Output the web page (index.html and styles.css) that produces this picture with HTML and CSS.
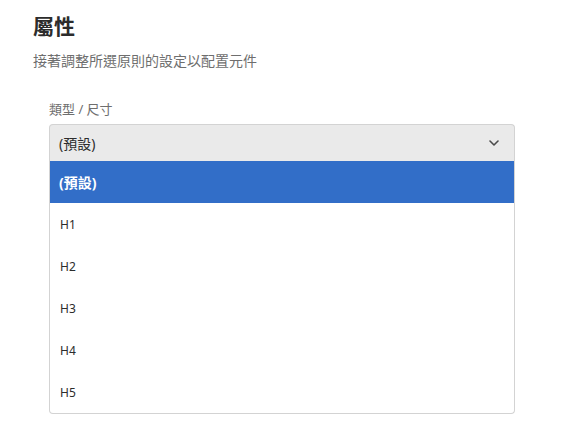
FILE: index.html
```html
<!DOCTYPE html>
<html lang="zh-Hant">
<head>
<meta charset="utf-8">
<link rel="stylesheet" href="styles.css">
</head>
<body>
<div class="panel">
  <h1 class="title">屬性</h1>
  <p class="subtitle">接著調整所選原則的設定以配置元件</p>
  <div class="field">
    <div class="label">類型 / 尺寸</div>
    <div class="select">
      <span class="value">(預設)</span>
      <svg class="chev" width="10" height="6" viewBox="0 0 10 6"><path d="M1 1 L5 5 L9 1" fill="none" stroke="#4b4b4b" stroke-width="1.6" stroke-linecap="round" stroke-linejoin="round"/></svg>
    </div>
    <ul class="list">
      <li class="item selected">(預設)</li>
      <li class="item">H1</li>
      <li class="item">H2</li>
      <li class="item">H3</li>
      <li class="item">H4</li>
      <li class="item">H5</li>
    </ul>
  </div>
</div>
</body>
</html>
```
FILE: styles.css
```css
html, body {
  margin: 0;
  padding: 0;
  background: #ffffff;
}
body {
  font-family: "Noto Sans", "Noto Sans CJK TC", sans-serif;
  color: #2c2c2c;
}
.panel {
  padding: 11px 47px 0 33px;
}
.title {
  margin: 0;
  font-size: 21px;
  line-height: 30px;
  font-weight: 700;
  color: #2c2c2c;
}
.subtitle {
  margin: 11px 0 0;
  font-size: 14px;
  line-height: 18px;
  color: #6e6e6e;
}
.field {
  margin: 30px 0 0 16px;
}
.label {
  font-size: 13px;
  line-height: 18px;
  color: #6e6e6e;
}
.select {
  margin-top: 6px;
  height: 37px;
  box-sizing: border-box;
  border: 1px solid #d3d3d3;
  border-bottom: none;
  border-radius: 4px 4px 0 0;
  background: #eaeaea;
  display: flex;
  align-items: center;
  justify-content: space-between;
  padding: 0 15px 0 9px;
}
.value {
  font-size: 14px;
  color: #2c2c2c;
}
.chev {
  display: block;
}
.list {
  list-style: none;
  margin: 0;
  padding: 0;
  border: 1px solid #d3d3d3;
  border-top: none;
  border-radius: 0 0 4px 4px;
  overflow: hidden;
}
.item {
  height: 42px;
  display: flex;
  align-items: center;
  padding-left: 10px;
  font-size: 12px;
  color: #2c2c2c;
}
.item.selected {
  background: #326ec8;
  color: #ffffff;
  font-weight: 700;
  font-size: 14px;
  padding-left: 9px;
}
```
